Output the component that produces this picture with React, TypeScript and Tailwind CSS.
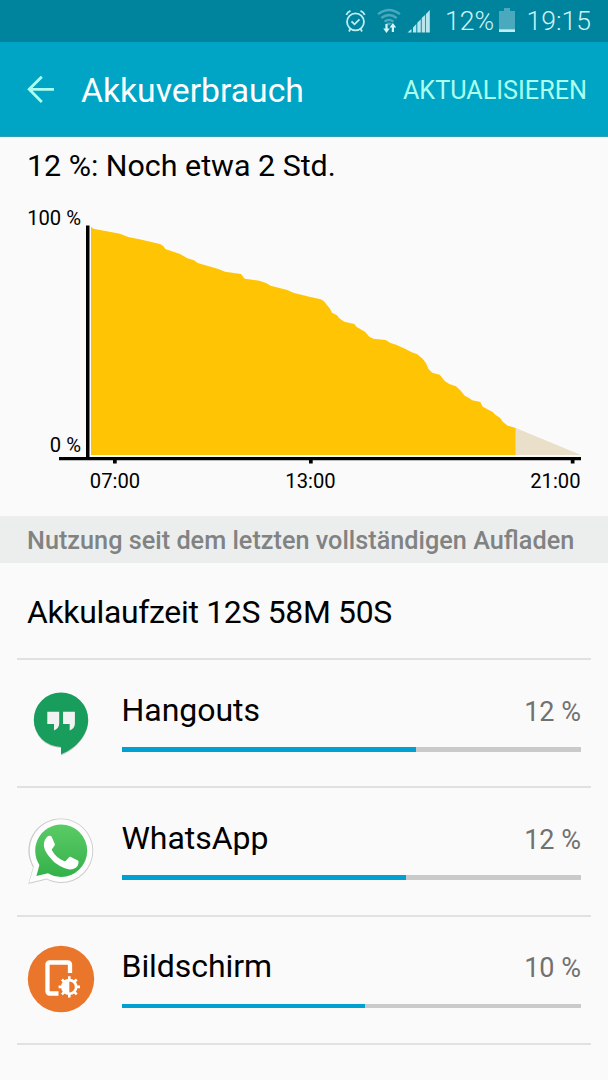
import React from "react";

type Usage = {
  name: string;
  percent: string;
  fill: number;
  icon: React.ReactNode;
};

const HangoutsIcon = () => (
  <svg width="68" height="68" viewBox="0 0 68 68">
    <path
      d="M34 4.500a27.200 27.200 0 0 0 0 54.400v7.600C50 60 61.200 46 61.200 31.700A27.200 27.200 0 0 0 34 4.500z"
      fill="#c6ccc9"
    />
    <path
      d="M34 3.500a27.200 27.200 0 0 0 0 54.400v7.400C50 59 61.200 45 61.200 30.700A27.200 27.200 0 0 0 34 3.500z"
      fill="#189d5c"
    />
    <path d="M20.300 22.700h11.900v11.800c0 3.400-1.800 5.600-5.200 6.900v-6.300h-6.700zM36 22.700h11.900v11.800c0 3.400-1.800 5.600-5.200 6.900v-6.300H36z" fill="#f1f3f2" />
  </svg>
);

const WhatsAppIcon = () => (
  <svg width="68" height="68" viewBox="0 0 68 68">
    <defs>
      <linearGradient id="wa" x1="0" y1="0" x2="0" y2="1">
        <stop offset="0" stopColor="#5acb66" />
        <stop offset="0.5" stopColor="#49be58" />
        <stop offset="1" stopColor="#32b249" />
      </linearGradient>
    </defs>
    <path
      d="M34 1.500a32.200 32.200 0 0 1 0 64.600c-5 0-10-1.300-14.200-3.500L1.300 67l4.700-16.600A32.200 32.200 0 0 1 34 1.500z"
      fill="#cbcccb"
    />
    <path
      d="M34 2.300a31.400 31.400 0 0 1 0 62.800c-5 0-10-1.300-14.200-3.500L2.200 65.800l4.700-16.400A31.400 31.400 0 0 1 34 2.300z"
      fill="#fdfdfd"
    />
    <path
      d="M34 7.500a26.200 26.200 0 0 1 0 52.400c-4.700 0-9.200-1.300-13-3.600L9.400 59l3-11.100A26.200 26.200 0 0 1 34 7.500z"
      fill="url(#wa)"
    />
    <path
      d="M20.500 19.500c.8-.8 2.400-.8 3.300-.4.700.3 1 .9 1.300 1.700l2.600 6c.3.900.1 1.600-.4 2.300l-2 2.600c-.5.600-.6 1.200-.1 2 2.900 4.900 6.800 8.200 11.800 10.300.9.400 1.500.3 2.100-.4l2.700-3.200c.6-.7 1.200-.8 2-.4l6.100 2.900c1 .5 1.500.8 1.600 1.400.2 1.300-.1 3.300-1 4.600-1.600 2.200-4.700 3.600-7.500 3.500-2.700-.1-8.500-1.900-13.500-5.600-5-3.700-9.100-9.400-11-12.900-2.700-5-1.900-10.700 2-14.400z"
      fill="#fff"
    />
  </svg>
);

const ScreenIcon = () => (
  <svg width="68" height="68" viewBox="0 0 68 68">
    <circle cx="34" cy="34" r="33.200" fill="#e9762b" />
    <path d="M43 28V19.500a2 2 0 0 0-2-2H22.500a2 2 0 0 0-2 2v27a2 2 0 0 0 2 2h9" fill="none" stroke="#fff" strokeWidth="4.300" />
    <circle cx="42.300" cy="41.900" r="9.800" fill="#e9762b" />
    <g stroke="#fff" strokeWidth="2.600">
      <path d="M42.300 31.200v21.400M31.600 41.900H53M34.900 34.500l14.800 14.800M49.700 34.500 34.900 49.300" />
    </g>
    <circle cx="42.300" cy="41.900" r="8.200" fill="#fff" />
    <path d="M42.300 36.400a5.500 5.500 0 0 1 0 11z" fill="#e9762b" />
  </svg>
);

const usages: Usage[] = [
  { name: "Hangouts", percent: "12 %", fill: 64.1, icon: <HangoutsIcon /> },
  { name: "WhatsApp", percent: "12 %", fill: 62, icon: <WhatsAppIcon /> },
  { name: "Bildschirm", percent: "10 %", fill: 53.1, icon: <ScreenIcon /> },
];

const StatusBar = () => (
  <div className="flex h-[42px] items-center bg-[#00839c] pl-[344px] text-[26.600px] font-light text-[#cdf3f6]">
    {/* alarm, wifi and signal */}
    <svg width="88" height="28" viewBox="0 0 88 28" className="mt-px shrink-0" fill="none">
      <g stroke="#c0edf1" strokeWidth="1.800">
        <circle cx="11.500" cy="13.800" r="8.500" />
        <path d="m7.500 13.300 3 3 5-5M2.300 6.800q1.200-3 4.200-4M20.700 6.800q-1.200-3-4.200-4M6.500 20.800 5 23.500M16.500 20.800l1.500 2.700" />
      </g>
      <g stroke="#4ba9bd" strokeWidth="2.300">
        <path d="M34 6.200q11-8.500 22 0M37.300 10q7.700-6 15.400 0M40.500 13.700q4.500-3.600 9 0" />
      </g>
      <path d="m42 15.500 3 2 3-2q-3-2-6 0z" fill="#4ba9bd" />
      <path d="M42.500 16v7M48.900 24v-7" stroke="#d5f5f6" strokeWidth="2.200" />
      <path d="m39.200 20.500 3.300 4.500 3.300-4.500zM45.600 19.500l3.300-4.500 3.300 4.500z" fill="#d5f5f6" />
      <path d="M63.500 24.500 67.500 21v3.500zM69 24.500v-5l3.300-3.500v8.500zM73.300 24.500V14.800l3.500-3.500v13.200zM77.700 24.500V10l3.300-3v17.500zM81.800 24.500V6.200L85.800 2v22.500z" fill="#b8e6ed" />
    </svg>
    <span className="ml-[13px] w-[49px] whitespace-nowrap">12%</span>
    <svg width="16" height="24" viewBox="0 0 16 24" className="mb-[2px] ml-[5px] shrink-0">
      <path d="M5 0h6v3h5v21H0V3h5z" fill="#4ba9bd" />
      <path d="M0 21.300h16V24H0z" fill="#c0edf1" />
    </svg>
    <span className="ml-[11.500px]">19:15</span>
  </div>
);

const Header = () => (
  <div className="flex h-[95px] items-center border-b border-[#2f9fb4] bg-[#00a5c6] pr-[21px] pl-[27px]">
    <svg width="28" height="28" viewBox="0 0 28 28" fill="none" stroke="#aaffef" strokeWidth="2.800">
      <path d="M14.800 1.700 2.200 14.300l12.600 12.600M2.200 14.300H27" />
    </svg>
    <h1 className="ml-[26px] pt-[5px] text-[33.700px] text-white">Akkuverbrauch</h1>
    <button className="ml-auto pt-[4px] text-[25.200px] text-[#aaffef]">AKTUALISIEREN</button>
  </div>
);

const BatteryChart = () => (
  <svg width="608" height="322" viewBox="0 194 608 322" className="block text-[20.200px]">
    <path
      d="M91 226.700 93.300 228.700 120 233.800 128.300 237 141.700 239.700 160 244 163.300 246 165.300 249 180 254 187.300 258.300 194 260.300 197.700 263 218.300 269 225 271.700 241 274 244.700 278.700 259.300 280.700 266 283 270.700 285.700 287.300 290 293.300 292.700 309.300 296.700 320.700 299.300 323.700 301 330 308.700 332 312.700 337 315.300 339.300 318.300 344.300 321.700 354.300 324 356.700 327 365 331.700 369.300 336.700 373.300 338.700 385.700 340 390 342.700 396.700 345 405 348.700 411.700 352.300 417.300 354.300 422.700 358.700 426 363.300 428.700 369.300 432.300 372.700 439.700 374.700 445 381.300 449.300 384 456 386.300 461 391 464.700 395.700 469 398 472.300 400.300 480.300 402 482.700 406.700 492.700 412 495.300 414.700 500.300 418 502.700 421.700 507.700 425.700 515.800 428V455H91z"
      fill="#ffc403"
    />
    <path d="M515.800 428 581 455h-65.200z" fill="#eae0c9" />
    <path d="M86 225.500h3.500V457H86zM59 457h522v3.300H59zM113 460h3.700v3.500H113zM309 460h3.700v3.500H309zM570.800 460h3.700v3.500h-3.700z" fill="#000" />
    <g fill="#000">
      <text x="81" y="225" textAnchor="end">100 %</text>
      <text x="81" y="452" textAnchor="end">0 %</text>
      <text x="115" y="487.500" textAnchor="middle">07:00</text>
      <text x="310.500" y="487.500" textAnchor="middle">13:00</text>
      <text x="580.500" y="487.500" textAnchor="end">21:00</text>
    </g>
  </svg>
);

const UsageRow = ({ usage }: { usage: Usage }) => (
  <li className="flex h-[128.300px] border-b-2 border-[#e1e1e1] px-[10px]">
    <div className="mt-[28.500px] w-[94.500px] shrink-0">{usage.icon}</div>
    <div className="flex-1 pt-[27px]">
      <div className="flex h-[46px] items-center justify-between">
        <span className="pb-px text-[32px] tracking-[-0.050px] text-black">{usage.name}</span>
        <span className="pt-[4px] text-[27px] text-[#717171]">{usage.percent}</span>
      </div>
      <div className="mt-[14.200px] h-[4.500px] bg-[#cacaca]">
        <div className="h-full bg-[#00a0d0]" style={{ width: `${usage.fill}%` }} />
      </div>
    </div>
  </li>
);

export default function App() {
  return (
    <div className="h-[1080px] w-[608px] overflow-hidden bg-[#fafafa] font-['Roboto',sans-serif]">
      <StatusBar />
      <Header />
      <h2 className="flex h-[57px] items-center pl-[27px] text-[30.400px] text-black">12 %: Noch etwa 2 Std.</h2>
      <BatteryChart />
      <div className="flex h-[47px] items-center bg-[#eceeee] pt-[3px] pl-[27px] text-[25.250px] font-medium whitespace-nowrap text-[#818383]">
        Nutzung seit dem letzten vollständigen Aufladen
      </div>
      <div className="px-[17px]">
        <div className="flex h-[97px] items-center border-b-2 border-[#e1e1e1] pt-[5px] pl-[10px] text-[31.900px] tracking-[-0.300px] text-black">
          Akkulaufzeit 12S 58M 50S
        </div>
        <ul>
          {usages.map((usage) => (
            <UsageRow key={usage.name} usage={usage} />
          ))}
        </ul>
      </div>
    </div>
  );
}
